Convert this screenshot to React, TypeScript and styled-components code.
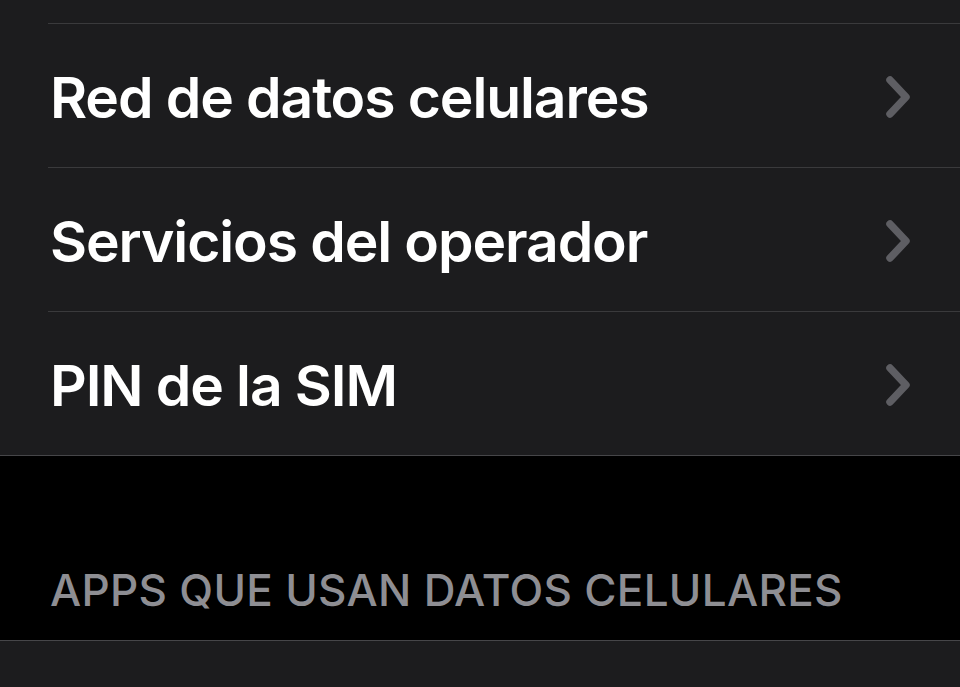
import React from 'react';
import styled, { createGlobalStyle } from 'styled-components';

const GlobalStyle = createGlobalStyle`
  html, body {
    margin: 0;
    padding: 0;
    background: #000;
  }
  body {
    font-family: Inter, "Noto Sans", "Liberation Sans", sans-serif;
    -webkit-font-smoothing: antialiased;
  }
`;

const Screen = styled.div`
  width: 960px;
  height: 687px;
  overflow: hidden;
  background: #000;
`;

const Group = styled.div<{ $last?: boolean }>`
  background: #1c1c1e;
  border-bottom: ${(p) => (p.$last ? 'none' : '1px solid #464649')};
  border-top: ${(p) => (p.$last ? '1px solid #464649' : 'none')};
`;

const CutRow = styled.div`
  height: 23px;
`;

const Row = styled.div<{ $first?: boolean }>`
  height: 143px;
  margin-left: 48px;
  padding-right: 46px;
  display: flex;
  align-items: center;
  justify-content: space-between;
  border-top: ${(p) => (p.$first ? 'none' : '1px solid #3a3a3c')};
`;

const Label = styled.span`
  color: #fff;
  font-size: 57px;
  font-weight: 600;
  letter-spacing: -1.1px;
  padding-left: 2px;
  padding-top: 4px;
`;

const Value = styled.span`
  color: #8e8e93;
  font-size: 57px;
  font-weight: 600;
  letter-spacing: -1.1px;
  padding-top: 4px;
`;

const SectionHeader = styled.div`
  height: 184px;
  box-sizing: border-box;
  padding: 0 0 23px 50px;
  display: flex;
  align-items: flex-end;
  color: #8e8e93;
  font-size: 44px;
  font-weight: 500;
  letter-spacing: 0.3px;
`;

const Chevron = () => (
  <svg width="30" height="44" viewBox="0 0 30 44">
    <path
      d="M6 6 L22 23 L6 40"
      fill="none"
      stroke="#5e5e63"
      strokeWidth="7.5"
      strokeLinecap="round"
      strokeLinejoin="round"
    />
  </svg>
);

const items = ['Red de datos celulares', 'Servicios del operador', 'PIN de la SIM'];

export default function App() {
  return (
    <>
      <GlobalStyle />
      <Screen>
        <Group>
          <CutRow />
          {items.map((label) => (
            <Row key={label}>
              <Label>{label}</Label>
              <Chevron />
            </Row>
          ))}
        </Group>
        <SectionHeader>APPS QUE USAN DATOS CELULARES</SectionHeader>
        <Group $last>
          <Row $first>
            <Label>Período actual</Label>
            <Value>12.5 GB</Value>
          </Row>
        </Group>
      </Screen>
    </>
  );
}
